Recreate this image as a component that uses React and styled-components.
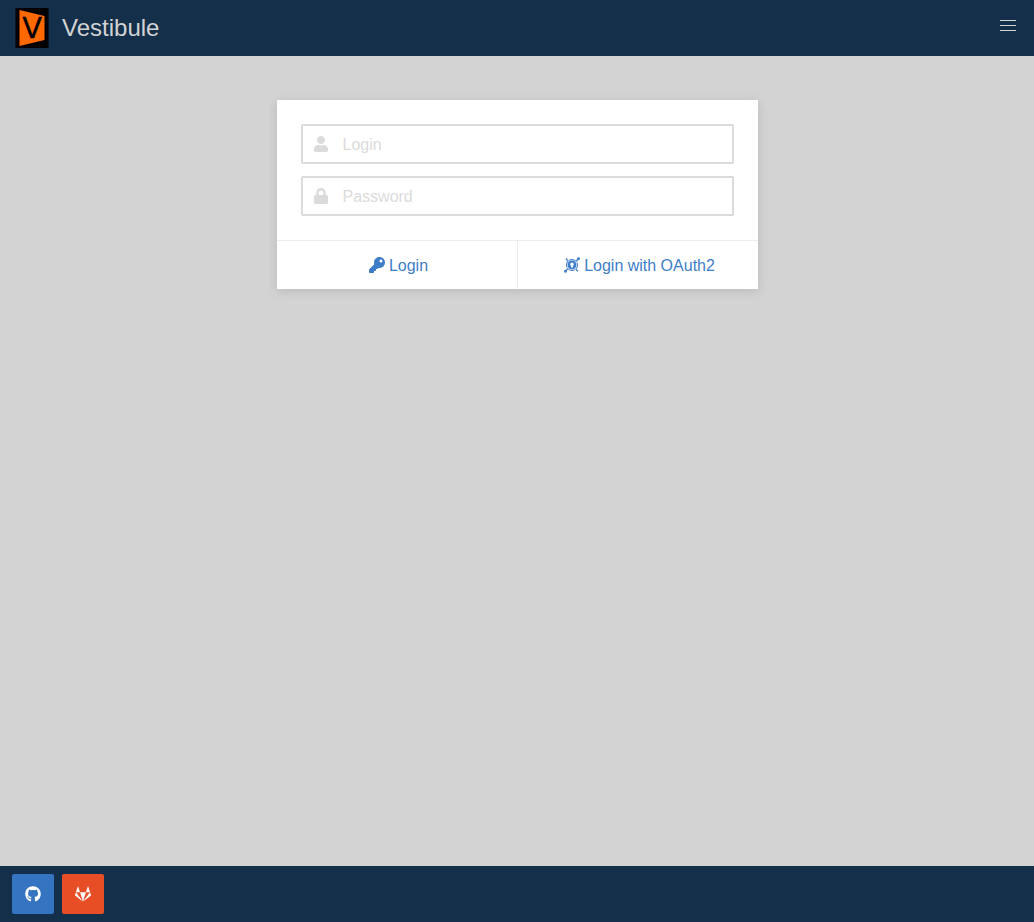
import React from 'react';
import styled, { createGlobalStyle } from 'styled-components';
import { FaUser, FaLock, FaKey, FaKeycdn, FaGithub, FaGitlab } from 'react-icons/fa';

const GlobalStyle = createGlobalStyle`
  *, *::before, *::after { box-sizing: border-box; }
  body {
    margin: 0;
    background: #d3d3d3;
    font-family: "Liberation Sans", Arial, sans-serif;
    font-size: 16px;
    line-height: 24px;
  }
  button, input { font: inherit; }
`;

const Page = styled.div`
  display: flex;
  flex-direction: column;
  min-height: 100vh;
`;

const Navbar = styled.header`
  display: flex;
  justify-content: space-between;
  align-items: flex-start;
  min-height: 56px;
  background: #142f4a;
`;

const Brand = styled.a`
  display: flex;
  align-items: center;
  gap: 10px;
  padding: 8px 12px;
  color: #d3d3d3;
  font-size: 24px;
  text-decoration: none;
`;

const Logo = styled.svg`
  width: 40px;
  height: 40px;
`;

const Burger = styled.button`
  display: flex;
  flex-direction: column;
  gap: 4px;
  width: 52px;
  height: 52px;
  padding: 20px 18px;
  border: 0;
  background: none;
  cursor: pointer;
`;

const BurgerBar = styled.span`
  height: 1px;
  width: 16px;
  background: #d3d3d3;
`;

const Main = styled.main`
  flex: 1;
  display: flex;
  justify-content: center;
  align-items: flex-start;
  padding: 44px 12px;
`;

const Card = styled.form`
  width: calc(50% - 24px);
  min-width: 320px;
  background: #fff;
  box-shadow: 0 2px 10px rgba(10, 10, 10, 0.12);
`;

const CardContent = styled.div`
  display: flex;
  flex-direction: column;
  gap: 12px;
  padding: 24px;
`;

const Field = styled.label`
  display: flex;
  align-items: center;
  height: 40px;
  border: 2px solid #dbdbdb;
  border-radius: 2px;
  color: #dbdbdb;
`;

const FieldIcon = styled.span`
  display: flex;
  justify-content: center;
  width: 36px;
`;

const Input = styled.input`
  flex: 1;
  min-width: 0;
  height: 36px;
  padding: 2px 12px 0 4px;
  border: 0;
  outline: 0;
  background: none;
  color: #363636;
  &::placeholder { color: #dbdbdb; opacity: 1; }
`;

const CardFooter = styled.div`
  display: flex;
  border-top: 1px solid #ededed;
`;

const FooterAction = styled.button`
  flex: 1 1 0;
  display: flex;
  align-items: center;
  justify-content: center;
  gap: 4px;
  padding: 11px 12px 11px 16px;
  border: 0;
  background: none;
  color: #3e7ec8;
  cursor: pointer;
  & + & { border-left: 1px solid #ededed; }
`;

const ActionLabel = styled.span`
  padding-top: 2px;
`;

const Footer = styled.footer`
  display: flex;
  gap: 8px;
  padding: 8px 12px;
  background: #142f4a;
`;

const SourceLink = styled.a`
  display: flex;
  align-items: center;
  justify-content: center;
  width: 42px;
  height: 40px;
  border-radius: 2px;
  background: ${({ $color }) => $color};
  color: #fff;
`;

export default function App() {
  return (
    <Page>
      <GlobalStyle />
      <Navbar>
        <Brand href="#">
          <Logo viewBox="0 0 40 40" aria-hidden="true">
            <rect x="3.5" width="33" height="40" fill="#000" />
            <path d="M7.5 2 L32.5 8 V32 L7.5 38 Z" fill="#ff6900" />
            <text
              x="20.2"
              y="30"
              textAnchor="middle"
              fontFamily="DejaVu Sans, sans-serif"
              fontSize="29"
              stroke="#000"
              strokeWidth="0.3"
            >
              V
            </text>
          </Logo>
          <span>Vestibule</span>
        </Brand>
        <Burger type="button" aria-label="Menu">
          <BurgerBar />
          <BurgerBar />
          <BurgerBar />
        </Burger>
      </Navbar>
      <Main>
        <Card onSubmit={(event) => event.preventDefault()}>
          <CardContent>
            <Field>
              <FieldIcon><FaUser /></FieldIcon>
              <Input type="text" placeholder="Login" aria-label="Login" />
            </Field>
            <Field>
              <FieldIcon><FaLock /></FieldIcon>
              <Input type="password" placeholder="Password" aria-label="Password" />
            </Field>
          </CardContent>
          <CardFooter>
            <FooterAction type="submit">
              <FaKey />
              <ActionLabel>Login</ActionLabel>
            </FooterAction>
            <FooterAction type="button">
              <FaKeycdn />
              <ActionLabel>Login with OAuth2</ActionLabel>
            </FooterAction>
          </CardFooter>
        </Card>
      </Main>
      <Footer>
        <SourceLink href="#" $color="#3474c0" aria-label="GitHub"><FaGithub /></SourceLink>
        <SourceLink href="#" $color="#e84e26" aria-label="GitLab"><FaGitlab /></SourceLink>
      </Footer>
    </Page>
  );
}
